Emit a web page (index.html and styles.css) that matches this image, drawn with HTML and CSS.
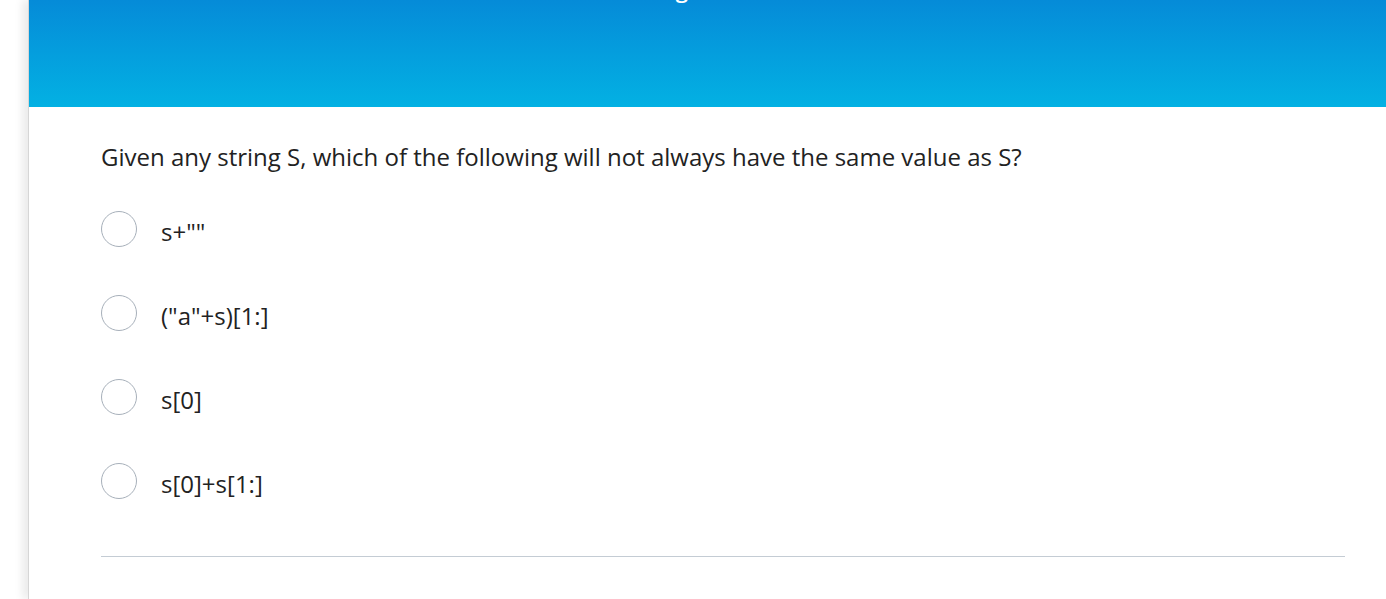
FILE: index.html
```html
<!DOCTYPE html>
<html>
<head>
<meta charset="utf-8">
<link rel="stylesheet" href="styles.css">
</head>
<body>
<div class="page">
  <div class="card">
    <header class="hero">
      <h1 class="hero-title">Strings Review</h1>
    </header>
    <div class="content">
      <p class="question">Given any string S, which of the following will not always have the same value as S?</p>
      <ul class="options">
        <li class="option"><span class="radio"></span><span class="label">s+""</span></li>
        <li class="option"><span class="radio"></span><span class="label">("a"+s)[1:]</span></li>
        <li class="option"><span class="radio"></span><span class="label">s[0]</span></li>
        <li class="option"><span class="radio"></span><span class="label">s[0]+s[1:]</span></li>
      </ul>
      <hr class="divider">
    </div>
  </div>
</div>
</body>
</html>
```
FILE: styles.css
```css
html, body {
  margin: 0;
  padding: 0;
  background: #ffffff;
  overflow: hidden;
}
body {
  font-family: "Open Sans", "Noto Sans", sans-serif;
  color: #222;
}
.page {
  padding-left: 28px;
  height: 599px;
}
.card {
  background: #fff;
  border-left: 1px solid #d6d6d6;
  box-shadow: -6px 0 8px rgba(0,0,0,0.08);
  height: 100%;
}
.hero {
  height: 107px;
  background: linear-gradient(to bottom, #058bd8, #03b1e3);
  overflow: hidden;
  display: flex;
  justify-content: center;
  padding-right: 10px;
}
.hero-title {
  margin: -24px 0 0 0;
  color: #fff;
  font-size: 22px;
  font-weight: 600;
  line-height: 26px;
  height: 30px;
}
.content {
  padding: 0 41px 0 72px;
}
.question {
  margin: 33px 0 0 0;
  font-size: 24px;
  line-height: 33px;
}
.options {
  list-style: none;
  margin: 38px 0 0 0;
  padding: 0;
}
.option {
  display: flex;
  align-items: center;
  gap: 24px;
  height: 36px;
  margin-bottom: 48px;
}
.radio {
  width: 34px;
  height: 34px;
  border: 1px solid #a7b0ba;
  border-radius: 50%;
  flex: none;
}
.label {
  font-size: 24px;
  line-height: 33px;
  padding-top: 5px;
}
.divider {
  border: 0;
  border-top: 1px solid #c4ccd4;
  margin: 57px 0 0 0;
}
```
